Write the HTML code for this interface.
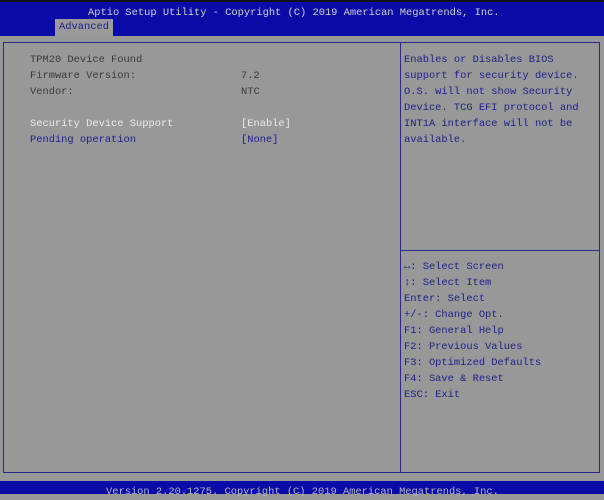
<!DOCTYPE html>
<html><head><style>
body{margin:0;width:604px;height:494px;overflow:hidden;background:#989898;position:relative;font-family:"Liberation Mono",monospace;font-size:10.4px;}
.a{position:absolute;white-space:pre;line-height:16px;}
.top{position:absolute;left:0;top:0;width:604px;height:36px;background:#0a0aa6;border-top:2px solid #111;box-sizing:border-box;}
.tab{position:absolute;left:55px;top:19px;width:58px;height:17px;background:#9a9a9a;color:#1e1e8c;text-align:center;line-height:17px;}
.frame{position:absolute;left:3px;top:42px;width:597px;height:431px;border:1px solid #2a2a8c;box-sizing:border-box;}
.vd{position:absolute;left:400px;top:42px;width:1px;height:431px;background:#2a2a8c;}
.hd{position:absolute;left:400px;top:250px;width:200px;height:1px;background:#2a2a8c;}
.foot{position:absolute;left:0;top:481px;width:604px;height:13px;background:#0a0aa6;}
.g{color:#3a3a3a}.w{color:#ececec}.b{color:#1e1e8c}
</style></head><body>
<div class="top"></div>
<div class="a" style="left:88px;top:5px;color:#d0d0d0">Aptio Setup Utility - Copyright (C) 2019 American Megatrends, Inc.</div>
<div class="tab">Advanced</div>
<div class="frame"></div><div class="vd"></div><div class="hd"></div>
<div class="a g" style="left:30px;top:52px">TPM20 Device Found
Firmware Version:
Vendor:</div>
<div class="a g" style="left:241px;top:68px">7.2
NTC</div>
<div class="a w" style="left:30px;top:116px">Security Device Support</div>
<div class="a w" style="left:241px;top:116px">[Enable]</div>
<div class="a b" style="left:30px;top:132px">Pending operation</div>
<div class="a b" style="left:241px;top:132px">[None]</div>
<div class="a b" style="left:404px;top:52px">Enables or Disables BIOS
support for security device.
O.S. will not show Security
Device. TCG EFI protocol and
INT1A interface will not be
available.</div>
<div class="a b" style="left:404px;top:259px">↔: Select Screen
↕: Select Item
Enter: Select
+/-: Change Opt.
F1: General Help
F2: Previous Values
F3: Optimized Defaults
F4: Save &amp; Reset
ESC: Exit</div>
<div class="foot"></div>
<div class="a" style="left:106px;top:484px;color:#b8b8c8">Version 2.20.1275. Copyright (C) 2019 American Megatrends, Inc.</div>
</body></html>
